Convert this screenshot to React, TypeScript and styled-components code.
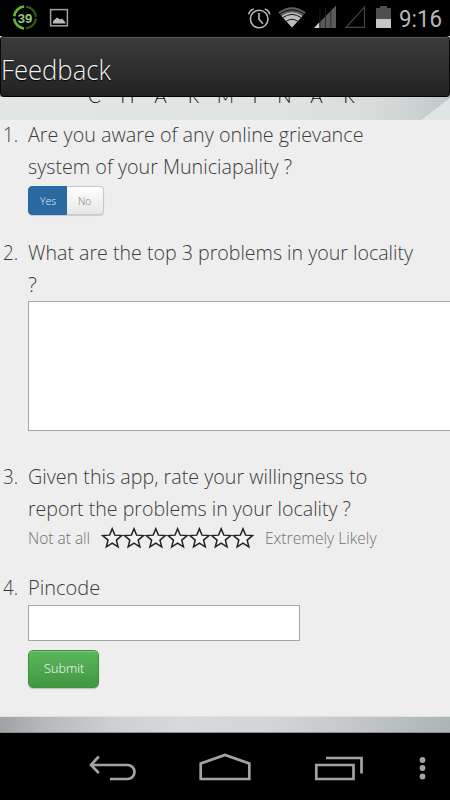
import React, { useLayoutEffect, useRef, useState } from "react";
import styled, { createGlobalStyle } from "styled-components";

const Global = createGlobalStyle`
  body { margin: 0; background: #000; overflow: hidden; }
  * { box-sizing: border-box; }
`;

const Screen = styled.div`
  width: 450px;
  height: 800px;
  overflow: hidden;
  display: flex;
  flex-direction: column;
  background: #000;
  font-family: "Open Sans", "Noto Sans", sans-serif;
  font-weight: 300;
  color: #222;
`;

const StatusBar = styled.div`
  height: 36px;
  flex: none;
  background: #000;
`;

const Header = styled.header`
  height: 61px;
  flex: none;
  padding: 12px 0 0 0;
  background: linear-gradient(#3c3c3c, #222);
  border: 1px solid #080808;
  border-bottom: 1px solid #000;
  border-radius: 4px;
  box-shadow: inset 0 1px 0 #555, 0 1px 1px rgba(0, 0, 0, 0.35);
`;

const HeaderBack = styled.div`
  flex: none;
  background: #d9dddd;
`;

const Banner = styled.div`
  height: 23px;
  flex: none;
  overflow: hidden;
  background:
    linear-gradient(142deg, transparent 50%, #dfe5e4 51%) 100% 0 / 28px 23px no-repeat,
    linear-gradient(90deg, #e2e7e6 0%, #dfe4e3 60%, #d8dddc 82%, #c3c9c9 100%);
`;

const Letters = styled.div`
  display: grid;
  grid-template-columns: 33px 33px 33px 33px 31px 28px 31px 33px 32px;
  margin: -13px 0 0 78px;
  line-height: 24px;
  font-family: Lato, sans-serif;
  font-size: 19px;
  font-weight: 300;
  color: #111;
  text-align: center;
`;

const Form = styled.main`
  height: 597px;
  margin-top: -1px;
  flex: none;
  background: linear-gradient(transparent 1px, #eee 1px);
`;

const Question = styled.section<{ $height: number }>`
  display: grid;
  grid-template-columns: 25px 422px;
  padding-left: 3px;
  height: ${(p) => p.$height}px;
`;

const TextLine = styled.div<{ $size: number; $line: number; $color: string; $shadow?: string }>`
  height: ${(p) => p.$line}px;
  line-height: ${(p) => p.$line}px;
  font-size: ${(p) => p.$size}px;
  color: ${(p) => p.$color};
  text-shadow: ${(p) => p.$shadow ?? "none"};
  white-space: pre;
`;

const Scaled = styled.span`
  display: inline-block;
  transform-origin: 0 50%;
`;

type FitProps = {
  width: number;
  children: string;
  size?: number;
  line?: number;
  color?: string;
  shadow?: string;
};

/* A single line of text condensed horizontally to the given advance width. */
function Fit({ width, children, size = 20, line = 32, color = "#3c3c3c", shadow }: FitProps) {
  const ref = useRef<HTMLSpanElement>(null);
  const [scale, setScale] = useState(1);
  useLayoutEffect(() => {
    if (ref.current) setScale(width / ref.current.offsetWidth);
  }, [width]);
  return (
    <TextLine $size={size} $line={line} $color={color} $shadow={shadow}>
      <Scaled ref={ref} style={{ transform: `scaleX(${scale})` }}>{children}</Scaled>
    </TextLine>
  );
}

const Toggle = styled.div`
  display: flex;
  width: 76px;
  height: 29px;
  margin-top: 3px;
  border-radius: 4px;
  box-shadow: 0 1px 1px rgba(0, 0, 0, 0.15);
`;

const Option = styled.button<{ $on?: boolean }>`
  width: ${(p) => (p.$on ? 39 : 37)}px;
  height: 29px;
  padding: 0 0 0 11px;
  font: inherit;
  text-align: left;
  border: 1px solid ${(p) => (p.$on ? "#2368a0" : "#c8c8c8")};
  border-left-width: ${(p) => (p.$on ? 1 : 0)}px;
  border-radius: ${(p) => (p.$on ? "4px 0 0 4px" : "0 4px 4px 0")};
  background: ${(p) => (p.$on ? "#2b69a3" : "linear-gradient(#fff, #e6e6e6)")};
`;

const TextArea = styled.textarea`
  display: block;
  width: 440px;
  height: 130px;
  margin: 0;
  padding: 4px;
  border: 1px solid #a6a6a6;
  background: #fff;
  resize: none;
  outline: none;
`;

const PinInput = styled.input`
  display: block;
  width: 272px;
  height: 36px;
  margin: 1px 0 9px;
  border: 1px solid #a6a6a6;
  background: #fff;
  outline: none;
`;

const Submit = styled.button`
  display: block;
  width: 71px;
  height: 38px;
  padding: 0 0 2px 15px;
  font: inherit;
  text-align: left;
  border: 1px solid #39953a;
  border-radius: 5px;
  background: linear-gradient(#5cb85c, #419641);
  box-shadow: inset 0 1px 0 #78c578, 0 1px 1px rgba(0, 0, 0, 0.2);
`;

const Rating = styled.div`
  display: grid;
  grid-template-columns: 73px 164px 120px;
  height: 28px;
`;

const Footer = styled.div`
  height: 17px;
  flex: none;
  border-top: 1px solid #dfe1e1;
  border-bottom: 1px solid #8b8f91;
  background: linear-gradient(90deg, #9ca2a7 0, #b3b9ba 9%, #cbd0d0 25%, #d6dada 40%, #d2d7d7 58%, #c4caca 77%, #adb4b7 100%);
`;

const NavBar = styled.nav`
  height: 67px;
  flex: none;
  background: #000;
`;

const starPoints = Array.from({ length: 10 }, (_, i) => {
  const r = i % 2 ? 4.4 : 10;
  const a = -Math.PI / 2 + (i * Math.PI) / 5;
  return `${(r * Math.cos(a)).toFixed(2)},${(r * Math.sin(a)).toFixed(2)}`;
}).join(" ");

const Stars = () => (
  <svg width="160" height="28" viewBox="0 0 160 28" fill="#f3f3f3" stroke="#222" strokeWidth="1.5">
    {[0, 1, 2, 3, 4, 5, 6].map((i) => (
      <polygon key={i} points={starPoints} transform={`translate(${11.2 + i * 21.8} 13.7)`} />
    ))}
  </svg>
);

const StatusIcons = () => (
  <svg width="450" height="36" viewBox="0 0 450 36" fill="none">
    <circle cx="25" cy="17.5" r="10.9" stroke="#2f5c17" strokeWidth="2.3" strokeDasharray="15.1 2" strokeDashoffset="-1" />
    <path d="M14.2 16.2A10.9 10.9 0 0 1 24 6.600M14.200 18.800A10.900 10.900 0 0 0 24 28.400" stroke="#67b72f" strokeWidth="2.500" />
    <text x="25" y="22.500" textAnchor="middle" fontFamily="Liberation Sans" fontWeight="700" fontSize="13" fill="#8fca80">39</text>
    <rect x="50.600" y="9.600" width="16.800" height="16.200" stroke="#a0a0a0" strokeWidth="1.500" />
    <path d="M53 23.500V21l4-3.500 3 2 2-1 3.500 4v1z" fill="#bbb" />

    <g stroke="#b8b8b8" strokeWidth="1.600">
      <circle cx="259.200" cy="19" r="8.800" />
      <path d="M259 13v6.300l4 4.500M248.700 14.300q.8-4 5-5.400M269.800 14.300q-.8-4-5-5.400" />
    </g>

    <path d="M292 27.500 278.200 12.300Q292 2 305.800 12.300Z" fill="#5c5c5c" />
    <path d="M292 27.500 281.500 16Q292 8.700 302.500 16Z" fill="#bdbdbd" />
    <path d="M280.200 13.700Q292 5.800 303.800 13.700M283 17.500Q292 11.300 301 17.500M286.300 21.200Q292 17.500 297.700 21.200" stroke="#000" strokeWidth="0.900" />

    <path d="M314 28 336 5.500V28z" fill="#5a5a5a" />
    <path d="M314 28 319.200 22.500V28z" fill="#ccc" />
    <path d="M320 8V28M325.500 8V28M330.800 8V28" stroke="#222" strokeWidth="0.800" />
    <path d="M346 27.400 364.500 7V27.400z" stroke="#444" strokeWidth="1.200" />

    <path d="M376 8h4V6h7v2h4v20h-15z" fill="#505050" />
    <path d="M376 19h15v9h-15z" fill="#c6c6c6" />
    <text x="399" y="26.500" textLength="43" lengthAdjust="spacingAndGlyphs" fontFamily="Roboto" fontWeight="400" fontSize="24" fill="#b8b8b8">9:16</text>
  </svg>
);

const NavIcons = () => (
  <svg width="450" height="67" viewBox="0 0 450 67" fill="none" stroke="#a3a3a3" strokeWidth="2.700">
    <path d="M91 32H127.500A6.900 6.900 0 0 1 127.500 46H110M98.800 23.500 91 32l7.800 8" />
    <path d="M200.700 46V30.500L225 22l24.300 8.500V46z" />
    <path d="M316.300 32H353.500V46H316.300zM326 25H361.500V40.500" />
    <g fill="#a3a3a3" stroke="none">
      <circle cx="422.500" cy="27" r="2.900" />
      <circle cx="422.500" cy="35" r="2.900" />
      <circle cx="422.500" cy="43.500" r="2.900" />
    </g>
  </svg>
);

export default function App() {
  return (
    <>
      <Global />
      <Screen>
        <StatusBar><StatusIcons /></StatusBar>
        <HeaderBack>
          <Header>
            <Fit width={110} size={28} line={40} color="#f2f2f2" shadow="0 1px 1px #000">Feedback</Fit>
          </Header>
        </HeaderBack>
        <Banner>
          <Letters>
            {"CHARMINAR".split("").map((c, i) => <span key={i}>{c}</span>)}
          </Letters>
        </Banner>
        <Form>
          <Question $height={118}>
            <Fit width={15}>1.</Fit>
            <div>
              <Fit width={336}>Are you aware of any online grievance</Fit>
              <Fit width={264}>system of your Municiapality ?</Fit>
              <Toggle>
                <Option $on><Fit width={16} size={11} line={26} color="#e6f0fa">Yes</Fit></Option>
                <Option><Fit width={13} size={11} line={26} color="#777">No</Fit></Option>
              </Toggle>
            </div>
          </Question>
          <Question $height={224}>
            <Fit width={15}>2.</Fit>
            <div>
              <Fit width={385}>What are the top 3 problems in your locality</Fit>
              <Fit width={8.5}>?</Fit>
              <TextArea />
            </div>
          </Question>
          <Question $height={111}>
            <Fit width={15}>3.</Fit>
            <div>
              <Fit width={339}>Given this app, rate your willingness to</Fit>
              <Fit width={323}>report the problems in your locality ?</Fit>
              <Rating>
                <Fit width={62} size={16} line={27} color="#707070">Not at all</Fit>
                <Stars />
                <Fit width={112} size={16} line={27} color="#707070">Extremely Likely</Fit>
              </Rating>
            </div>
          </Question>
          <Question $height={144}>
            <Fit width={15}>4.</Fit>
            <div>
              <Fit width={72}>Pincode</Fit>
              <PinInput />
              <Submit><Fit width={40} size={13} line={34} color="#fff">Submit</Fit></Submit>
            </div>
          </Question>
        </Form>
        <Footer />
        <NavBar><NavIcons /></NavBar>
      </Screen>
    </>
  );
}
